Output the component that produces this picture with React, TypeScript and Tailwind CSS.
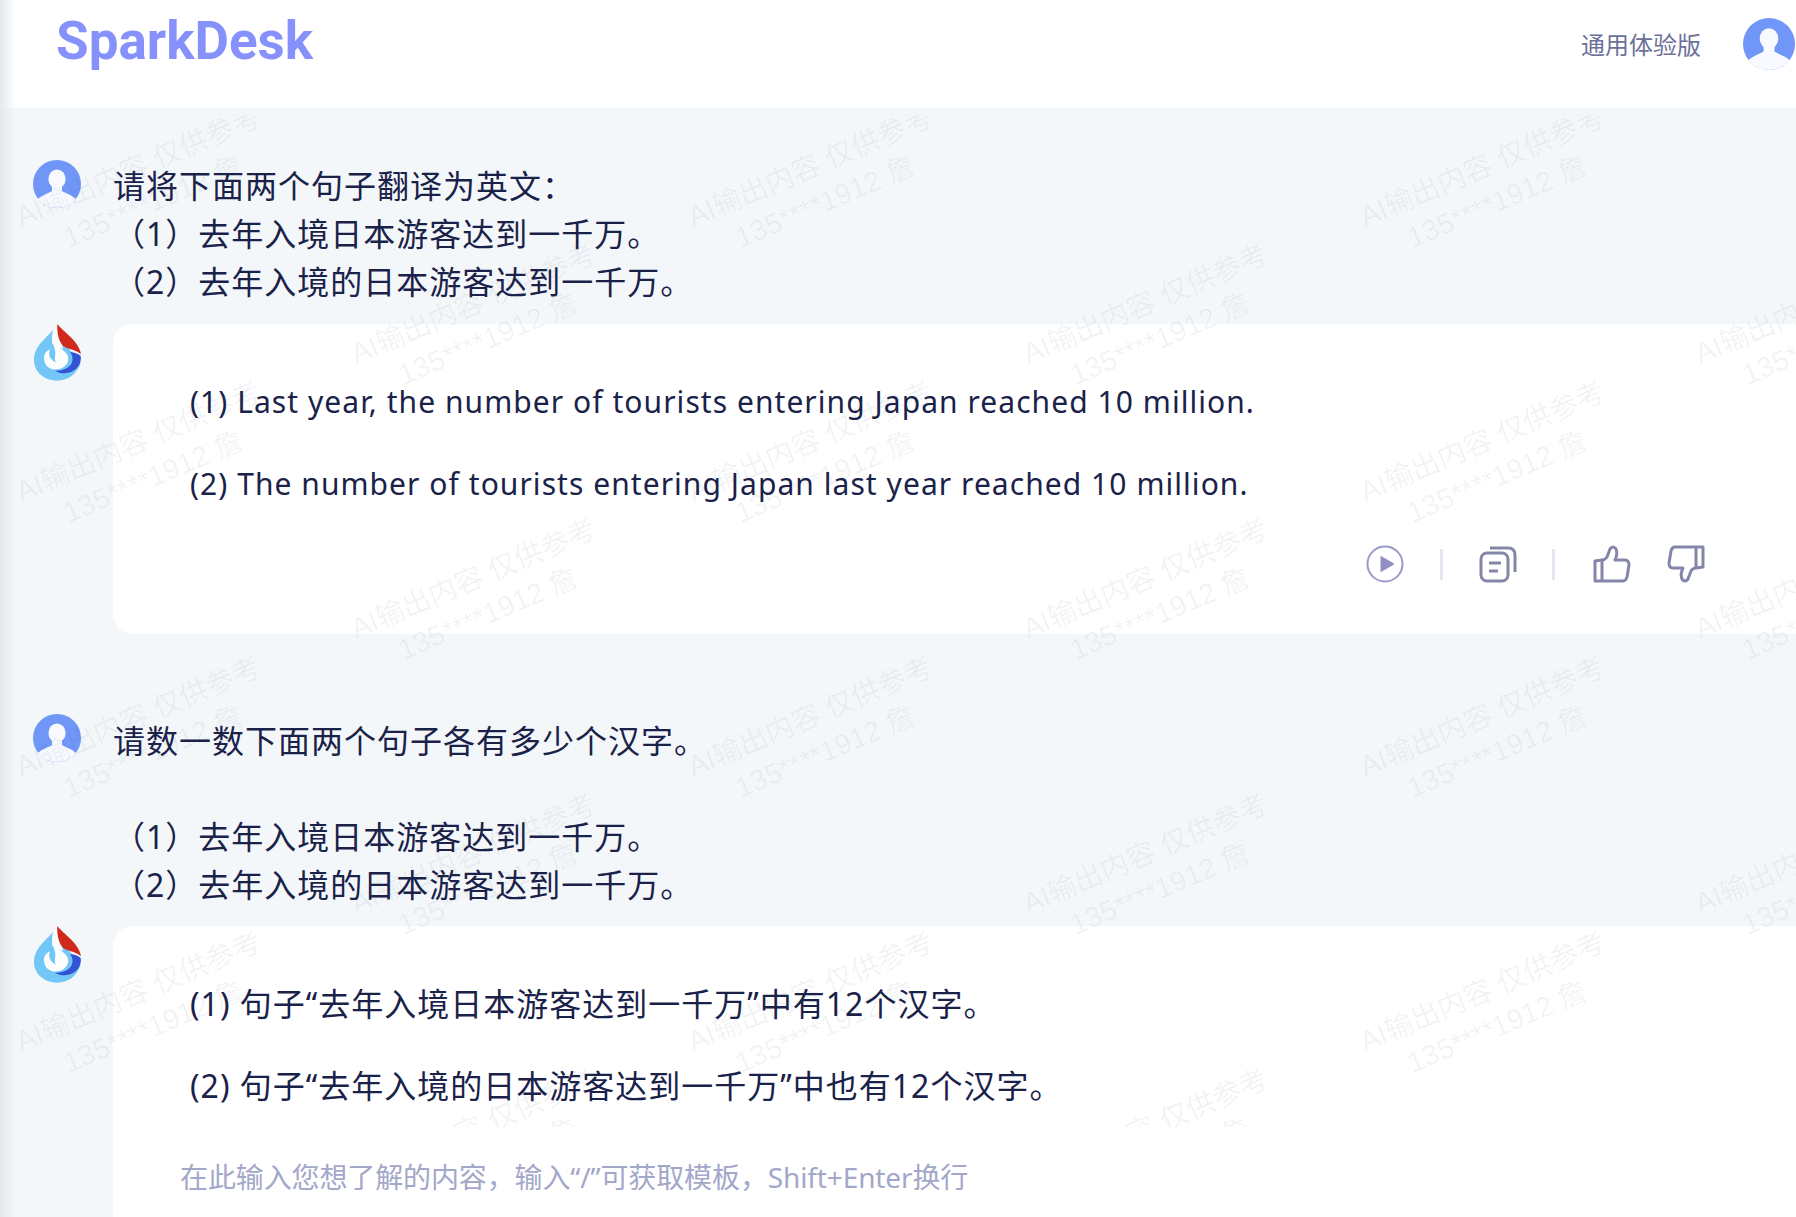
const FONT = "font-['Noto_Sans','Noto_Sans_CJK_SC',sans-serif]";

const UserAvatar = ({ size = "w-12 h-12" }: { size?: string }) => (
  <svg viewBox="0 0 48 48" className={`${size} shrink-0`}>
    <circle cx="24" cy="24" r="24" fill="#7097f7" />
    <ellipse cx="24" cy="19" rx="8.6" ry="9.6" fill="#f8faff" />
    <path d="M19 25 L19 31 C14 34 9 35 5 39 C10 45 17 48 24 48 C31 48 38 45 43 39 C39 35 34 34 29 31 L29 25 Z" fill="#f8faff" />
  </svg>
);

const SparkLogo = () => (
  <svg viewBox="36 36 156 180" className="w-[52px] h-[60px] shrink-0 -ml-px -mt-0.5">
    <path d="M100 58 C86 80 42 105 42 150 C42 188 75 212 112 212 C142 212 168 196 182 160 L150 120 Z" fill="#72c7f7" />
    <path d="M100 58 C100 85 110 108 128 120 C148 132 152 156 130 172 C108 186 74 178 72 146 C71 134 78 124 90 118 C84 132 88 148 108 158 C100 144 110 132 104 116 C98 100 92 80 100 58 Z" fill="#fdfefe" />
    <path d="M100 58 L112 58 L130 118 L96 100 Z" fill="#fdfefe" />
    <path d="M112 42 C130 66 176 92 183 132 C170 122 150 118 136 112 C118 104 110 70 112 42 Z" fill="#d12a1c" />
    <path d="M150 126 C165 128 176 132 182 138 C186 158 172 180 150 187 C134 192 118 190 104 182 C124 184 146 176 155 160 C160 148 158 136 150 126 Z" fill="#3453d4" />
  </svg>
);

const PlayIcon = () => (
  <svg viewBox="0 0 38 38" className="w-[38px] h-[38px]">
    <circle cx="19" cy="19" r="17.5" fill="none" stroke="#9a9aca" strokeWidth="2" />
    <path d="M15 11.5 L28 19 L15 26.5 Z" fill="#9190c4" stroke="#9190c4" strokeLinejoin="round" />
  </svg>
);

const CopyIcon = () => (
  <svg viewBox="0 0 38 38" className="w-[38px] h-[38px]" fill="none" stroke="#8486a8" strokeWidth="3">
    <rect x="2" y="8" width="27" height="28" rx="6" />
    <path d="M11 3 L29 3 Q36 3 36 10 L36 27" />
    <path d="M10 18 H22 M10 26 H19" />
  </svg>
);

const ThumbIcon = ({ down = false }: { down?: boolean }) => (
  <svg viewBox="0 0 38 38" className={`w-[38px] h-[38px] ${down ? "rotate-180" : ""}`} fill="none" stroke="#8486a8" strokeWidth="3" strokeLinejoin="round">
    <path d="M9 15 L2 16 L2 36 L30 36 Q33 36 34 32 L36 20 Q36 15 32 15 L22 15 Q25 9 23 4 Q20 0 17 4 L14 12 Q12 15 9 15 Z" />
    <path d="M9 15 L9 36" />
  </svg>
);

const Sep = () => <div className="w-[3px] h-[31px] bg-[#e4e5f1]" />;

const Watermark = () => (
  <div className="w-[672px] h-[137.5px] shrink-0 flex items-center justify-center">
    <div className="-rotate-[23deg] text-center text-[28.5px] leading-[38px] whitespace-nowrap text-[#1e3a5f10] font-['Liberation_Sans','Noto_Sans_CJK_SC',sans-serif]">
      <div>AI输出内容 仅供参考</div>
      <div>135****1912 詹</div>
    </div>
  </div>
);

const WatermarkRow = ({ shifted }: { shifted: boolean }) => (
  <div className={`flex shrink-0 ${shifted ? "ml-[144px]" : "-ml-[191px]"}`}>
    <Watermark />
    <Watermark />
    <Watermark />
    <Watermark />
  </div>
);

const rows = [false, true, false, true, false, true, false, true];

export default function App() {
  return (
    <div className={`relative w-full h-[1217px] overflow-hidden flex flex-col bg-[#f4f7f9] text-[#1a2249] ${FONT}`}>
      {/* HEADER */}
      <header className="h-[108px] shrink-0 bg-white flex items-start justify-between">
        <div className="ml-[56px] pt-[2px] font-['Roboto',sans-serif] font-bold text-[53px] leading-[78px] text-[#8791fb] origin-left">
          SparkDesk
        </div>
        <div className="flex items-start gap-[42px] pt-[18px] pr-[1px]">
          <span className="text-2xl leading-[54px] text-[#6b7199]">通用体验版</span>
          <UserAvatar size="w-[52px] h-[52px]" />
        </div>
      </header>

      {/* CHAT */}
      <main className="relative flex-1 min-h-0 overflow-hidden flex flex-col pt-[54px]">
        <section className="flex items-start gap-8 pl-[33px]">
          <div className="-mt-0.5"><UserAvatar /></div>
          <div className="text-[32px] leading-[48px] tracking-[1px]">
            <p>请将下面两个句子翻译为英文：</p>
            <p>（1）去年入境日本游客达到一千万。</p>
            <p>（2）去年入境的日本游客达到一千万。</p>
          </div>
        </section>

        <section className="flex items-start gap-[29px] pl-[33px] mt-[18px]">
          <SparkLogo />
          <div className="flex-1 h-[310px] bg-white rounded-tl-[20px] rounded-bl-[20px] pt-[37px] pl-[77px] pr-[91px] text-[30px] leading-[82px] tracking-[1.05px]">
            <p>(1) Last year, the number of tourists entering Japan reached 10 million.</p>
            <p>(2) The number of tourists entering Japan last year reached 10 million.</p>
            <div className="flex items-center justify-end mt-[20px]">
              <PlayIcon />
              <div className="ml-[36px] mr-[36px]"><Sep /></div>
              <CopyIcon />
              <div className="ml-[35px] mr-[38px]"><Sep /></div>
              <ThumbIcon />
              <div className="ml-[36px]"><ThumbIcon down /></div>
            </div>
          </div>
        </section>

        <section className="flex items-start gap-8 pl-[33px] mt-[83px]">
          <div className="-mt-[3px]"><UserAvatar /></div>
          <div className="text-[32px] leading-[48px] tracking-[1px]">
            <p>请数一数下面两个句子各有多少个汉字。</p>
            <p className="h-12" />
            <p>（1）去年入境日本游客达到一千万。</p>
            <p>（2）去年入境的日本游客达到一千万。</p>
          </div>
        </section>

        <section className="flex-1 flex items-start gap-[29px] pl-[33px] mt-[17px]">
          <SparkLogo />
          <div className="flex-1 self-stretch bg-white rounded-tl-[20px] pt-[37px] pl-[77px] text-[32px] leading-[82px] tracking-[1px]">
            <p>(1) 句子“去年入境日本游客达到一千万”中有12个汉字。</p>
            <p>(2) 句子“去年入境的日本游客达到一千万”中也有12个汉字。</p>
          </div>
        </section>

        {/* WATERMARK */}
        <div className="absolute inset-0 top-[7px] overflow-hidden pointer-events-none flex flex-col">
          {rows.map((shifted, i) => (
            <WatermarkRow key={i} shifted={shifted} />
          ))}
        </div>

        {/* INPUT */}
        <div className="absolute left-[113px] right-0 bottom-0 h-[90px] bg-white pl-[67px] pt-[30px] text-[28px] leading-10 tracking-[-0.12px] text-[#a3a7c9]">
          在此输入您想了解的内容，输入“/”可获取模板，Shift+Enter换行
        </div>
      </main>

      <div className="absolute left-0 top-0 bottom-0 w-[16px] bg-gradient-to-r from-[#e3e9ec] to-transparent pointer-events-none" />
    </div>
  );
}
